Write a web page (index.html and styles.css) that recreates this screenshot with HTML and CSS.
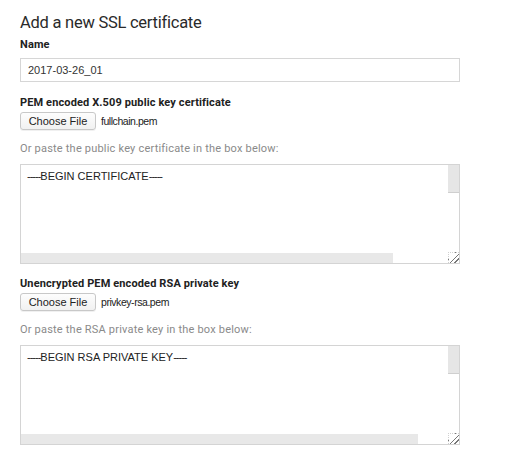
FILE: index.html
```html
<!DOCTYPE html>
<html lang="en">
<head>
<meta charset="utf-8">
<title>Add a new SSL certificate</title>
<link rel="stylesheet" href="styles.css">
</head>
<body>
<main class="form">
  <h1 class="title">Add a new SSL certificate</h1>

  <section class="field">
    <div class="label">Name</div>
    <div class="input">2017-03-26_01</div>
  </section>

  <section class="field field-cert">
    <div class="label">PEM encoded X.509 public key certificate</div>
    <div class="file-row">
      <span class="btn">Choose File</span>
      <span class="fname">fullchain.pem</span>
    </div>
    <p class="hint">Or paste the public key certificate in the box below:</p>
    <div class="textarea">
      <span class="ta-text"><span class="dash">-----</span>BEGIN CERTIFICATE<span class="dash">-----</span></span>
      <span class="vthumb"></span>
      <span class="hthumb" style="width:372px"></span>
      <span class="grip"></span>
    </div>
  </section>

  <section class="field field-key">
    <div class="label">Unencrypted PEM encoded RSA private key</div>
    <div class="file-row">
      <span class="btn">Choose File</span>
      <span class="fname">privkey-rsa.pem</span>
    </div>
    <p class="hint">Or paste the RSA private key in the box below:</p>
    <div class="textarea">
      <span class="ta-text"><span class="dash">-----</span>BEGIN RSA PRIVATE KEY<span class="dash">-----</span></span>
      <span class="vthumb"></span>
      <span class="hthumb" style="width:397px"></span>
      <span class="grip"></span>
    </div>
  </section>
</main>
</body>
</html>
```

FILE: styles.css
```css
html, body {
  margin: 0;
  padding: 0;
  background: #ffffff;
}

body {
  font-family: Roboto, "Liberation Sans", sans-serif;
  color: #212121;
}

.form {
  padding: 13px 0 0 20px;
  width: 440px;
  display: flex;
  flex-direction: column;
}

.title {
  margin: 0;
  font-size: 16.5px;
  line-height: 20px;
  font-weight: 400;
  letter-spacing: -0.25px;
  color: #2a2a2a;
}

.field {
  display: flex;
  flex-direction: column;
}

.label {
  font-size: 11px;
  line-height: 14px;
  font-weight: 700;
  letter-spacing: 0.12px;
  color: #212121;
}

.field:first-of-type .label {
  margin-top: 5px;
}

.input {
  margin-top: 6px;
  box-sizing: border-box;
  height: 24px;
  border: 1px solid #d6d6d6;
  padding: 0 7px;
  font-family: "Liberation Sans", Arial, sans-serif;
  font-size: 11px;
  line-height: 22px;
  color: #333333;
}

.field-cert {
  margin-top: 14px;
}

.field-key {
  margin-top: 13px;
}

.file-row {
  margin-top: 2px;
  display: flex;
  align-items: center;
  gap: 5px;
  height: 18px;
}

.btn {
  box-sizing: border-box;
  height: 18px;
  width: 76px;
  display: flex;
  align-items: center;
  justify-content: center;
  border: 1px solid #c8c8c8;
  border-radius: 3px;
  background: linear-gradient(#fdfdfd, #f1f1f1);
  box-shadow: 0 1px 0 rgba(0,0,0,0.06);
  font-family: "Liberation Sans", Arial, sans-serif;
  font-size: 11px;
  color: #222222;
}

.fname {
  font-family: "Liberation Sans", Arial, sans-serif;
  font-size: 10.5px;
  letter-spacing: -0.45px;
  color: #222222;
}

.hint {
  margin: 12px 0 0;
  font-size: 11px;
  line-height: 14px;
  color: #8a8a8a;
  letter-spacing: 0.2px;
}

.textarea {
  position: relative;
  margin-top: 8px;
  box-sizing: border-box;
  height: 100px;
  border: 1px solid #d4d4d4;
  padding: 4px 6px;
  font-family: "Liberation Sans", Arial, sans-serif;
  font-size: 11px;
  line-height: 14px;
  color: #222222;
}

.dash {
  letter-spacing: -1px;
}

.vthumb {
  position: absolute;
  top: 0;
  right: 0;
  width: 11px;
  height: 27px;
  background: #e6e6e6;
  border-bottom: 1px solid #cfcfcf;
}

.hthumb {
  position: absolute;
  left: 0;
  bottom: 0;
  height: 10px;
  background: #e8e8e8;
}

.grip {
  position: absolute;
  right: 0;
  bottom: 0;
  width: 11px;
  height: 11px;
  border-left: 1px dotted #d0d0d0;
  border-top: 1px dotted #d0d0d0;
  box-sizing: border-box;
  background:
    linear-gradient(135deg, transparent 0 52%, #777 52% 60%, transparent 60% 74%, #777 74% 82%, transparent 82%);
}
```
